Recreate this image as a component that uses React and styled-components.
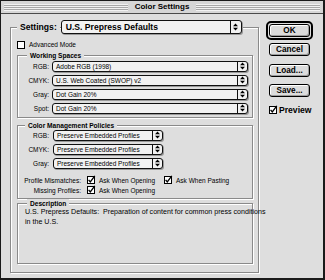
import React from 'react';
import styled, { createGlobalStyle } from 'styled-components';

const GlobalStyle = createGlobalStyle`
  html, body {
    margin: 0;
    padding: 0;
    background: #fff;
  }
  body {
    font-family: "Liberation Sans", Arial, sans-serif;
    color: #000;
  }
  * {
    box-sizing: border-box;
  }
`;

const Window = styled.div`
  width: 325px;
  height: 280px;
  background: #dedede;
  border: 1px solid #1a1a1a;
  border-right-width: 2px;
  border-bottom-width: 2px;
  display: flex;
  flex-direction: column;
  overflow: hidden;
`;

const TitleBar = styled.div`
  height: 13px;
  flex: none;
  display: flex;
  align-items: center;
  gap: 5px;
  padding: 0 3px;
  background: #d6d6d6;
  border-bottom: 1px solid #4a4a4a;
`;

const TitleStripes = styled.div`
  flex: 1;
  height: 7px;
  background: repeating-linear-gradient(to bottom, #f2f2f2 0 1px, #a8a8a8 1px 2px);
`;

const TitleText = styled.div`
  font-size: 8px;
  font-weight: bold;
  line-height: 12px;
  padding: 0 2px;
`;

const Body = styled.div`
  flex: 1;
  display: flex;
  align-items: flex-start;
  padding-left: 9px;
`;

const Group = styled.div`
  flex: none;
  display: flex;
  flex-direction: column;
  width: ${(p) => p.$w}px;
  height: ${(p) => p.$h}px;
  margin-top: ${(p) => p.$mt || 0}px;
  padding: ${(p) => p.$pad || '0'};
  border: 1px solid #8a8a8a;
  box-shadow: 1px 1px 0 #fff, inset 1px 1px 0 #fff;
`;

const GroupTitle = styled.div`
  align-self: flex-start;
  height: 9px;
  line-height: 9px;
  margin: -5px 0 0 ${(p) => p.$indent}px;
  padding: 0 3px;
  background: #dedede;
  font-size: 6.6px;
  font-weight: bold;
  white-space: nowrap;
`;

const SettingsRow = styled.div`
  display: flex;
  align-items: center;
  height: 14px;
  margin-top: -8px;
`;

const SettingsLabel = styled.span`
  height: 14px;
  line-height: 14px;
  padding: 0 3px;
  background: #dedede;
  font-size: 8.6px;
  font-weight: bold;
`;

const Popup = styled.div`
  flex: none;
  display: flex;
  align-items: stretch;
  width: ${(p) => p.$w}px;
  height: ${(p) => p.$h}px;
  margin-left: ${(p) => p.$ml || 0}px;
  border: 1px solid #111;
  border-radius: 3px;
  background: #f2f2f2;
  box-shadow: 1px 1px 0 #9a9a9a;
  font-size: ${(p) => (p.$big ? '8.6px' : '6.5px')};
  font-weight: ${(p) => (p.$big ? 'bold' : 'normal')};
`;

const PopupText = styled.span`
  flex: 1;
  display: flex;
  align-items: center;
  padding-left: ${(p) => (p.$big ? 4 : 3)}px;
  white-space: nowrap;
  overflow: hidden;
`;

const PopupArrow = styled.span`
  flex: none;
  width: ${(p) => (p.$big ? 11 : 10)}px;
  display: flex;
  align-items: center;
  justify-content: center;
  border-left: 1px solid #111;
`;

const FieldRow = styled.div`
  display: flex;
  align-items: center;
  height: ${(p) => p.$h || 14}px;
  margin-top: ${(p) => p.$mt || 0}px;
`;

const FieldLabel = styled.span`
  flex: none;
  width: ${(p) => p.$w}px;
  margin-right: ${(p) => p.$gap}px;
  text-align: right;
  font-size: 6.5px;
  white-space: nowrap;
`;

const CheckRow = styled.div`
  display: flex;
  align-items: center;
  height: 9px;
  margin-top: ${(p) => p.$mt || 0}px;
  margin-left: ${(p) => p.$ml || 0}px;
`;

const CheckBox = styled.span`
  flex: none;
  width: 8px;
  height: 8px;
  border: 1px solid #000;
  background: #fff;
  display: flex;
  margin-left: ${(p) => p.$ml || 0}px;
  svg {
    overflow: visible;
  }
`;

const CheckText = styled.span`
  margin-left: ${(p) => (p.$bold ? 2 : 4)}px;
  font-size: ${(p) => (p.$bold ? '8.6px' : '6.5px')};
  font-weight: ${(p) => (p.$bold ? 'bold' : 'normal')};
  white-space: nowrap;
`;

const Description = styled.div`
  margin: -1px 0 0 7px;
  font-size: 7.1px;
  line-height: 10px;
  white-space: nowrap;
`;

const Side = styled.div`
  display: flex;
  flex-direction: column;
  align-items: flex-start;
  margin: 7px 0 0 7px;
`;

const DefaultRing = styled.div`
  padding: 1px;
  border: 2px solid #000;
  border-radius: 5px;
`;

const Button = styled.div`
  width: 41px;
  height: 13px;
  margin: ${(p) => p.$m || '0'};
  display: flex;
  align-items: center;
  justify-content: center;
  border: 1px solid #000;
  border-radius: 3px;
  background: #dcdcdc;
  box-shadow: inset 1px 1px 0 #fff, inset -1px -1px 0 #9c9c9c;
  font-size: 8.2px;
  font-weight: bold;
`;

const Arrows = () => (
  <svg width="5" height="8" viewBox="0 0 5 8">
    <path d="M0 3.3 L2.5 0.5 L5 3.3Z M0 4.7 L5 4.7 L2.5 7.5Z" fill="#000" />
  </svg>
);

const Select = ({ w, h, ml, big, children }) => (
  <Popup $w={w} $h={h} $ml={ml} $big={big}>
    <PopupText $big={big}>{children}</PopupText>
    <PopupArrow $big={big}>
      <Arrows />
    </PopupArrow>
  </Popup>
);

const Check = ({ checked, ml }) => (
  <CheckBox $ml={ml}>
    {checked && (
      <svg width="6" height="6" viewBox="0 0 6 6">
        <path d="M0.6 2.8 L2.3 5 L6.8 -1.2" fill="none" stroke="#000" strokeWidth="1.3" />
      </svg>
    )}
  </CheckBox>
);

const workingSpaces = [
  ['RGB:', 'Adobe RGB (1998)'],
  ['CMYK:', 'U.S. Web Coated (SWOP) v2'],
  ['Gray:', 'Dot Gain 20%'],
  ['Spot:', 'Dot Gain 20%'],
];

const policies = [
  ['RGB:', 'Preserve Embedded Profiles'],
  ['CMYK:', 'Preserve Embedded Profiles'],
  ['Gray:', 'Preserve Embedded Profiles'],
];

export default function App() {
  return (
    <>
      <GlobalStyle />
      <Window>
        <TitleBar>
          <TitleStripes />
          <TitleText>Color Settings</TitleText>
          <TitleStripes />
        </TitleBar>
        <Body>
          <Group $w={249} $h={246} $mt={13} $pad="0 5px 0 6px">
            <SettingsRow>
              <SettingsLabel>Settings:</SettingsLabel>
              <Select w={181} h={14} ml={1} big>
                U.S. Prepress Defaults
              </Select>
            </SettingsRow>
            <CheckRow $mt={6}>
              <Check />
              <CheckText>Advanced Mode</CheckText>
            </CheckRow>

            <Group $w={236} $h={63} $mt={6}>
              <GroupTitle $indent={9}>Working Spaces</GroupTitle>
              {workingSpaces.map(([label, value], i) => (
                <FieldRow key={label} $mt={i === 0 ? -1 : 0}>
                  <FieldLabel $w={31} $gap={3}>{label}</FieldLabel>
                  <Select w={196} h={11}>{value}</Select>
                </FieldRow>
              ))}
            </Group>

            <Group $w={236} $h={74} $mt={7}>
              <GroupTitle $indent={7}>Color Management Policies</GroupTitle>
              {policies.map(([label, value], i) => (
                <FieldRow key={label} $mt={i === 0 ? -2 : 0}>
                  <FieldLabel $w={31} $gap={4}>{label}</FieldLabel>
                  <Select w={110} h={11}>{value}</Select>
                </FieldRow>
              ))}
              <FieldRow $h={10} $mt={5}>
                <FieldLabel $w={63} $gap={6}>Profile Mismatches:</FieldLabel>
                <Check checked />
                <CheckText>Ask When Opening</CheckText>
                <Check checked ml={9} />
                <CheckText>Ask When Pasting</CheckText>
              </FieldRow>
              <FieldRow $h={10}>
                <FieldLabel $w={63} $gap={6}>Missing Profiles:</FieldLabel>
                <Check checked />
                <CheckText>Ask When Opening</CheckText>
              </FieldRow>
            </Group>

            <Group $w={236} $h={61} $mt={4}>
              <GroupTitle $indent={9}>Description</GroupTitle>
              <Description>
                U.S. Prepress Defaults:&nbsp; Preparation of content for common press conditions
                <br />
                in the U.S.
              </Description>
            </Group>
          </Group>

          <Side>
            <DefaultRing>
              <Button>OK</Button>
            </DefaultRing>
            <Button $m="3px 0 0 3px">Cancel</Button>
            <Button $m="8px 0 0 3px">Load...</Button>
            <Button $m="7px 0 0 3px">Save...</Button>
            <CheckRow $mt={8} $ml={3}>
              <Check checked />
              <CheckText $bold>Preview</CheckText>
            </CheckRow>
          </Side>
        </Body>
      </Window>
    </>
  );
}
